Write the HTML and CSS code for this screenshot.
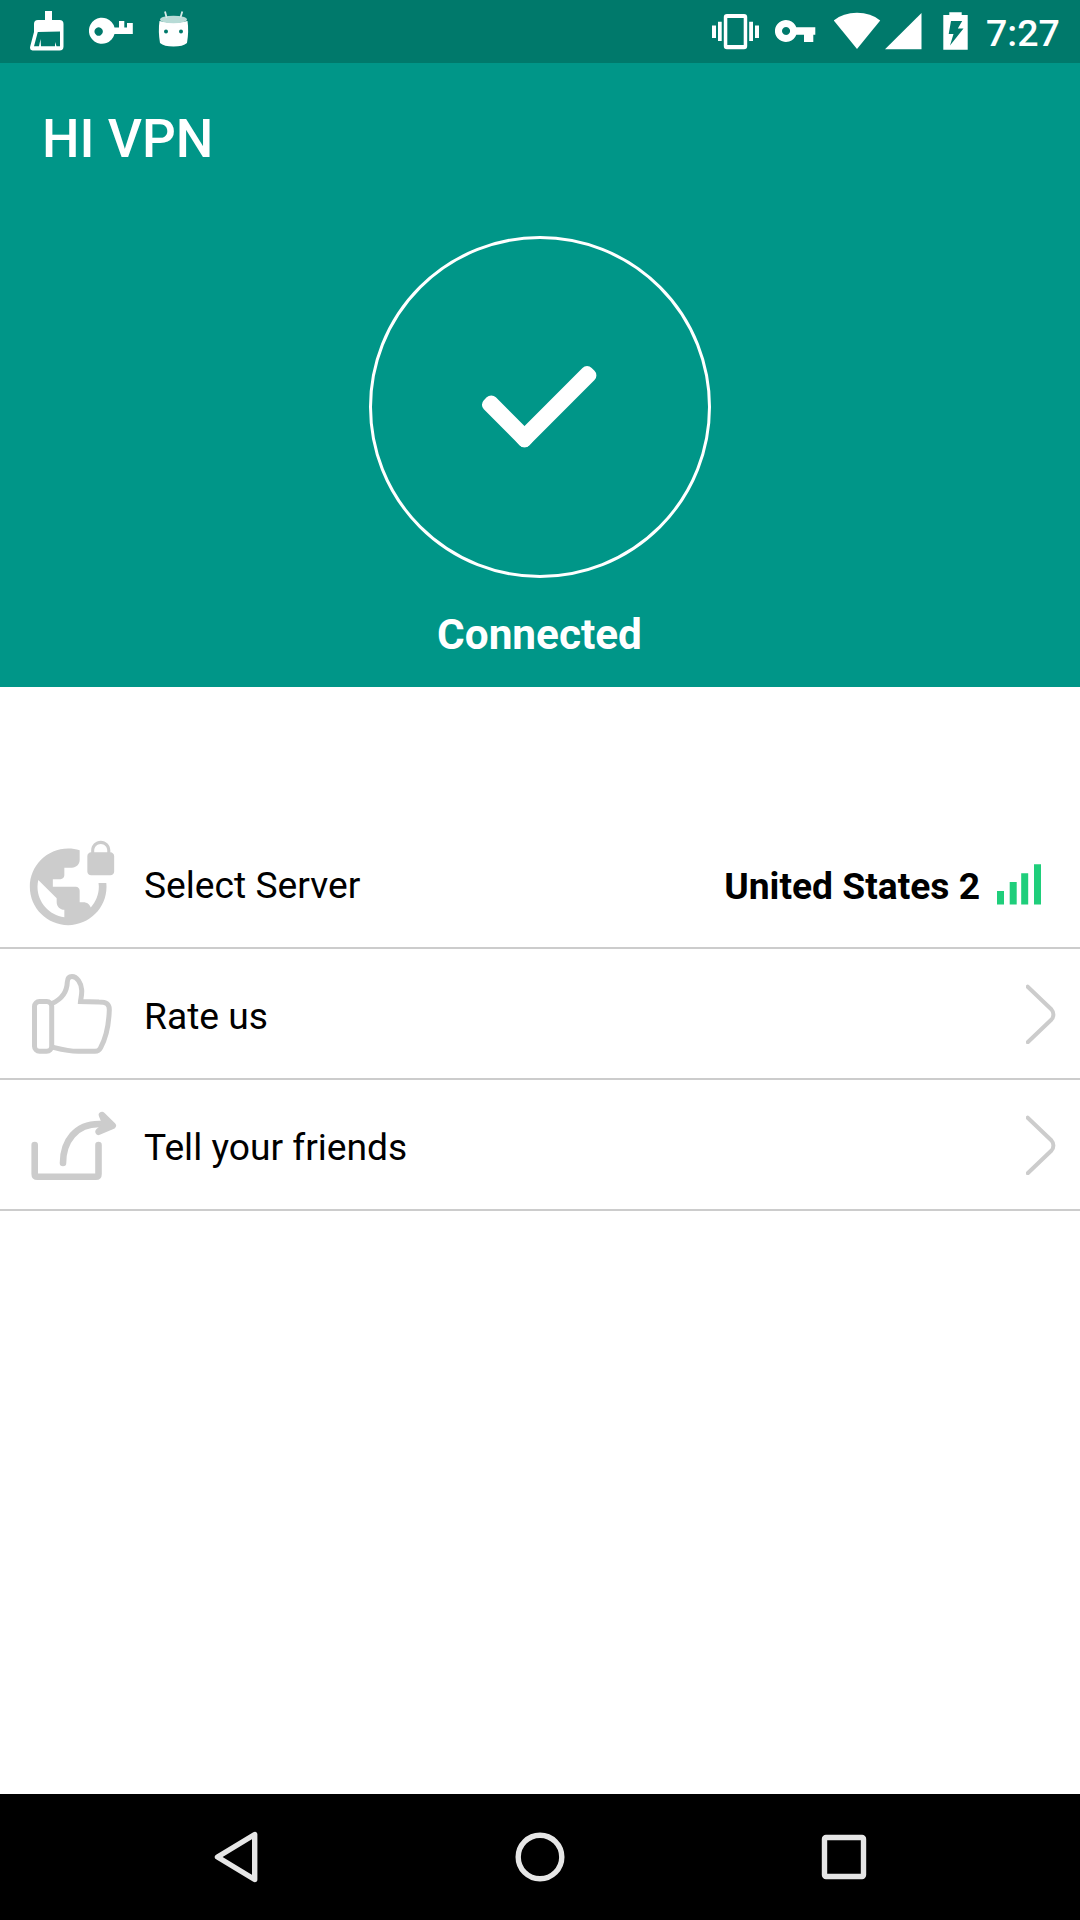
FILE: index.html
```html
<!DOCTYPE html>
<html lang="en">
  <head>
    <meta charset="utf-8" />
    <meta name="viewport" content="width=device-width, initial-scale=1" />
    <title>HI VPN</title>
    <link rel="stylesheet" href="styles.css">
  </head>
  <body>
    <div class="statusbar">
      <div class="status-left">
        <!-- cleaner -->
        <svg width="34" height="63" viewBox="30 0 34 63">
          <path fill-rule="evenodd" d="M45 11h7v9h7.500q4 0 4 4v22.500q0 4-4 4H32.500q-3.200 0-2.300-4L34 32v-8q0-4 4-4h7zM37.800 32L34 46.300h5L40.500 39l.5 7.300h14V42l1.500 4.300H60V31.500z" />
        </svg>
        <!-- vpn key -->
        <svg width="44" height="63" viewBox="89 0 44 63">
          <path fill-rule="evenodd" d="M119 27.500V21h5.300v6.500H127V23h5.800v11h-18.300a13 13 0 1 1 0-6.500zM98.600 27.300a4.200 4.200 0 1 0 .1 0z" />
        </svg>
        <!-- robot head -->
        <svg width="31" height="63" viewBox="158 0 31 63">
          <path d="M159.500 21q14 3 28 0q1.500 10-.5 22q-4 3.600-13.500 3.600T160 43q-2-12-.500-22z" />
          <ellipse class="robot-top" cx="173.500" cy="19.500" rx="13.500" ry="3.800" />
          <path class="robot-antenna" d="M165 11.500l1.700 6.500M182.300 11.500l-1.800 6" />
          <circle class="robot-eye" cx="166" cy="31.500" r="2" />
          <circle class="robot-eye" cx="181" cy="31.500" r="2" />
        </svg>
      </div>
      <div class="status-right">
        <!-- vibrate -->
        <svg width="47" height="63" viewBox="712 0 47 63">
          <path fill-rule="evenodd" d="M727 14h17q3.200 0 3.200 3v29q0 3.200-3.200 3.200H727q-3.200 0-3.200-3.200V17q0-3 3.200-3zM727.300 17.900V45h16.400V17.900z" />
          <path d="M712 25.500h4V38h-4zM718 21.700h3.700V41H718zM749.200 21.700h3.800V41h-3.800zM755 25.500h4V38h-4z" />
        </svg>
        <!-- key -->
        <svg width="41" height="63" viewBox="775 0 41 63">
          <path fill-rule="evenodd" d="M796.300 27.300h19v7.400h-2v7.300h-9.300v-7.300h-7.700a11 11 0 1 1 0-7.400zM786 27a4 4 0 1 0 .1 0z" />
        </svg>
        <!-- wifi -->
        <svg class="wifi" width="47" height="63" viewBox="834 0 47 63">
          <path d="M857 49L833.800 20.500Q843 12.800 857 12.800T880.200 20.500z" />
        </svg>
        <svg class="cell" width="37" height="63" viewBox="885 0 37 63">
          <path d="M885 49.300h36.500V13z" />
        </svg>
        <!-- battery, charging -->
        <svg class="battery" width="25" height="63" viewBox="943 0 25 63">
          <path fill-rule="evenodd" d="M949.300 12.300h12.400V15h6v34.700h-24.400V15h6zM951 21l-2.300 13h4.800L950 45.500l13.500-17h-5.700l4.400-7.500z" />
        </svg>
        <span class="clock">7:27</span>
      </div>
    </div>

    <div class="hero">
      <h1>HI VPN</h1>
      <div class="circle">
        <svg width="120" height="90" viewBox="480 362 120 90">
          <g transform="translate(524.5 450) rotate(-45)">
            <rect x="0" y="-17" width="105.500" height="17" rx="6.500" />
            <rect x="0" y="-64" width="17" height="64" rx="6.500" />
          </g>
        </svg>
      </div>
      <p class="state">Connected</p>
    </div>

    <ul class="menu">
      <li class="row">
        <svg class="icon" viewBox="0 0 24 24">
          <path class="solid" d="M22 4v-.5C22 2.120 20.880 1 19.500 1S17 2.120 17 3.500V4c-.55 0-1 .45-1 1v4c0 .55.45 1 1 1h5c.55 0 1-.45 1-1V5c0-.55-.45-1-1-1zm-.8 0h-3.400v-.5c0-.94.76-1.700 1.700-1.700s1.700.76 1.700 1.700V4zm-2.280 8c.04.33.08.66.08 1 0 2.080-.8 3.970-2.100 5.390-.26-.81-1-1.390-1.900-1.390h-1v-3c0-.55-.45-1-1-1H7v-2h2c.55 0 1-.45 1-1V8h2c1.100 0 2-.9 2-2V3.460c-.95-.3-1.950-.46-3-.46C5.480 3 1 7.480 1 13s4.480 10 10 10 10-4.480 10-10c0-.34-.02-.67-.05-1h-2.030zM10 20.930c-3.950-.49-7-3.850-7-7.930 0-.62.08-1.210.21-1.790L8 16v1c0 1.100.9 2 2 2v1.930z" />
        </svg>
        <span class="label">Select Server</span>
        <span class="server">United States 2</span>
        <svg class="signal" width="44" height="41" viewBox="997 863 44 41">
          <path d="M997 890h7v13.500h-7zM1009.700 881h7v22.500h-7zM1021.200 872.300h7v31.200h-7zM1034 863.300h7v40.200h-7z" />
        </svg>
      </li>
      <li class="row">
        <svg class="icon" viewBox="26 968 92 92">
          <rect class="thumb" x="34.500" y="1001.500" width="17.200" height="49.800" rx="5" />
          <path class="thumb" d="M52 1003.500C62 999 67 992 67.300 982C67.500 978 69.500 976.500 72 976.500C77 976.500 81.300 983 81.700 990C82 995 80.800 998 80.500 1001.500L99 1002C106.500 1002 109.500 1004 109.300 1010C108.800 1025 106 1038 100.500 1048C99.500 1050 98 1051.300 95 1051.300H78C68 1051.300 60 1049 52 1047" />
        </svg>
        <span class="label">Rate us</span>
        <svg class="arrow" width="30" height="60" viewBox="1026 984 30 60">
          <path d="M1027.700 986.700L1051.500 1009.500C1054 1012.200 1054 1016.800 1051.500 1019.500L1027.700 1042.200" />
        </svg>
      </li>
      <li class="row">
        <svg class="icon" viewBox="26 1099 92 92">
          <path class="share" d="M34.700 1145V1174q0 2.700 2.700 2.700H95.800q2.700 0 2.700-2.700V1145M63 1163C63 1141 76 1124 99 1124H106" />
          <path class="share head" d="M102 1115L112.700 1125.700L98.500 1131.800L106 1125z" />
        </svg>
        <span class="label">Tell your friends</span>
        <svg class="arrow" width="30" height="60" viewBox="1026 984 30 60">
          <path d="M1027.700 986.700L1051.500 1009.500C1054 1012.200 1054 1016.800 1051.500 1019.500L1027.700 1042.200" />
        </svg>
      </li>
    </ul>

    <div class="navbar">
      <svg width="50" height="54" viewBox="211 1830 50 54">
        <path d="M254.700 1834.500V1879.500L217.500 1857z" />
      </svg>
      <svg width="50" height="54" viewBox="515 1830 50 54">
        <circle cx="540" cy="1857" r="21.800" />
      </svg>
      <svg width="50" height="54" viewBox="819 1830 50 54">
        <rect x="824.500" y="1837.500" width="39" height="39" rx="1.500" />
      </svg>
    </div>
  </body>
</html>
```

FILE: styles.css
```css
* {
  box-sizing: border-box;
}

body {
  margin: 0;
  height: 1920px;
  display: flex;
  flex-direction: column;
  background-color: #ffffff;
  font-family: Roboto, sans-serif;
  color: #000;
}

svg {
  display: block;
  flex-shrink: 0;
}

/* status bar */
.statusbar {
  height: 63px;
  display: flex;
  justify-content: space-between;
  background-color: #00796b;
  padding: 0 21px 0 30px;
  color: #fff;
  fill: #fff;
}

.status-left,
.status-right {
  display: flex;
}

.status-left {
  gap: 25px;
}

.status-right svg {
  margin-right: 16px;
}

.status-right .wifi {
  margin-left: 2px;
  margin-right: 4px;
}

.status-right .cell {
  margin-right: 21px;
}

.status-right .battery {
  margin-right: 18px;
}

.robot-top {
  fill: #b8dbd6;
}

.robot-antenna {
  stroke: #d5eae7;
  stroke-width: 1.8;
}

.robot-eye {
  fill: #00796b;
}

.clock {
  width: 73px;
  font-size: 37.500px;
  font-weight: 500;
  line-height: 66px;
}

/* header */
.hero {
  height: 624px;
  display: flex;
  flex-direction: column;
  align-items: center;
  background-color: #009688;
  color: #fff;
}

.hero h1 {
  align-self: flex-start;
  margin: 45px 0 0 42px;
  font-size: 53px;
  font-weight: 500;
  line-height: 62px;
}

.circle {
  width: 342px;
  height: 342px;
  margin-top: 66px;
  padding: 123px 0 0 108px;
  border: 3px solid #fff;
  border-radius: 50%;
  fill: #fff;
}

.state {
  margin: 32px 0 0;
  padding-right: 1px;
  font-size: 42.300px;
  font-weight: 700;
  line-height: 50px;
}

/* menu */
.menu {
  flex: 1;
  margin: 131px 0 0;
  padding: 0;
  list-style: none;
}

.row {
  height: 131px;
  display: flex;
  align-items: center;
  padding: 0 24px 0 26px;
  border-bottom: 2px solid #cccccc;
  font-size: 37.200px;
}

.icon {
  width: 92px;
  height: 92px;
  margin-right: 26px;
  fill: none;
  stroke: #cccccc;
}

.solid {
  fill: #cccccc;
  stroke: none;
}

.thumb {
  stroke-width: 5;
}

.share {
  stroke-width: 6.600;
  stroke-linecap: round;
  stroke-linejoin: round;
}

.head {
  fill: #cccccc;
}

.label {
  flex: 1;
  padding-top: 5px;
}

.server {
  padding-top: 7px;
  font-weight: 700;
}

.signal {
  margin: 3px 15px 0 17px;
  fill: #1fce7b;
}

.arrow {
  fill: none;
  stroke: #cccccc;
  stroke-width: 4;
  stroke-linecap: round;
}

/* bottom navigation */
.navbar {
  height: 126px;
  display: flex;
  align-items: center;
  justify-content: space-between;
  padding: 0 211px;
  background-color: #000;
  fill: none;
  stroke: #e6e6e6;
  stroke-width: 5.400;
  stroke-linejoin: round;
}
```
